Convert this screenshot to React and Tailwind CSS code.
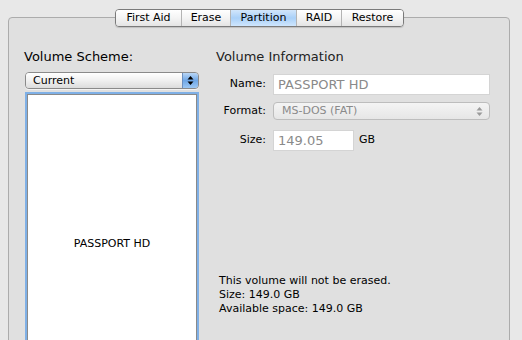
import React from 'react';

const tabs = [
  { name: 'First Aid', w: 'w-[65px]' },
  { name: 'Erase', w: 'w-[49px]' },
  { name: 'Partition', w: 'w-[66px]', active: true },
  { name: 'RAID', w: 'w-[45px]' },
  { name: 'Restore', w: 'w-[62px]' },
];

const Arrows = ({ color = 'black' }) => (
  <svg width="7" height="11" viewBox="0 0 7 11">
    <path d="M3.5 1 L6.5 4.5 L0.5 4.5 Z" fill={color} />
    <path d="M3.5 10 L6.5 6.5 L0.5 6.5 Z" fill={color} />
  </svg>
);

const App = () => {
  return (
    <div className="w-[522px] h-[340px] bg-[#e8e8e8] relative overflow-hidden font-['DejaVu_Sans',sans-serif] text-black">
      {/* tab panel */}
      <div className="absolute left-[8px] top-[17px] w-[502px] h-[340px] bg-[#e0e0e0] border border-[#acacac] rounded-[4px]">
        <div className="flex pt-[26px]">
          {/* left column */}
          <div className="pl-[15px] w-[200px]">
            <div className="text-[13px] leading-[16px] mt-[5px]">Volume Scheme:</div>
            <div className="mt-[7px] ml-[1px] w-[174px] h-[17px] flex rounded-[4px] border border-[#8a8a8a] overflow-hidden shadow-[0_1px_0_rgba(255,255,255,0.6)]">
              <div className="flex-1 bg-gradient-to-b from-white via-[#f0f0f0] to-[#dcdcdc] text-[11px] leading-[15px] pl-[7px]">Current</div>
              <div className="w-[16px] flex items-center justify-center bg-gradient-to-b from-[#b9d6f5] via-[#6fa7e6] to-[#9cc7f3] border-l border-[#6b8fbf]">
                <Arrows />
              </div>
            </div>
            <div className="mt-[3px] ml-[1px] w-[174px] h-[260px] border-[2px] border-[#7fb0e6] bg-white flex items-center justify-center">
              <div className="w-full h-full border border-[#8a8a8a] flex items-center justify-center">
                <span className="text-[11px] mt-[44px]">PASSPORT HD</span>
              </div>
            </div>
          </div>

          {/* right column */}
          <div className="pl-[7px] flex-1">
            <div className="text-[13px] leading-[16px] text-[#222] mt-[5px]">Volume Information</div>
            <div className="mt-[9px] grid grid-cols-[50px_1fr] gap-x-[7px] items-center text-[11px]">
              <div className="text-right">Name:</div>
              <div className="w-[217px] h-[21px] bg-white border border-[#d4d4d4] text-[13px] text-[#8a8a8a] pl-[4px] leading-[19px]">PASSPORT HD</div>

              <div className="text-right mt-[7px]">Format:</div>
              <div className="mt-[7px] w-[217px] h-[18px] rounded-[4px] border border-[#bdbdbd] bg-gradient-to-b from-[#f4f4f4] to-[#e6e6e6] flex items-center justify-between pl-[8px] pr-[6px] text-[#8a8a8a]">
                <span>MS-DOS (FAT)</span>
                <Arrows color="#9a9a9a" />
              </div>

              <div className="text-right mt-[10px]">Size:</div>
              <div className="mt-[10px] flex items-center">
                <div className="w-[81px] h-[21px] bg-white border border-[#d4d4d4] text-[13px] text-[#8a8a8a] pl-[4px] leading-[19px]">149.05</div>
                <span className="ml-[5px]">GB</span>
              </div>
            </div>
            <div className="mt-[123px] ml-[3px] text-[11px] leading-[14px]">
              <div>This volume will not be erased.</div>
              <div>Size: 149.0 GB</div>
              <div>Available space: 149.0 GB</div>
            </div>
          </div>
        </div>
      </div>

      {/* segmented tabs */}
      <div className="absolute left-[115px] top-[9px] h-[18px] flex rounded-[4px] border border-[#7a7a7a] overflow-hidden shadow-[0_1px_1px_rgba(0,0,0,0.15)]">
        {tabs.map((t, i) => (
          <div
            key={t.name}
            className={`${t.w} h-full flex items-center justify-center text-[11px] ${i > 0 ? 'border-l border-[#b4b4b4]' : ''} ${t.active ? 'bg-gradient-to-b from-[#d2e6fb] via-[#a9d0f8] to-[#cfe6fd]' : 'bg-gradient-to-b from-white via-[#f4f4f4] to-[#e4e4e4]'}`}
          >
            {t.name}
          </div>
        ))}
      </div>
    </div>
  );
};

export default App;
